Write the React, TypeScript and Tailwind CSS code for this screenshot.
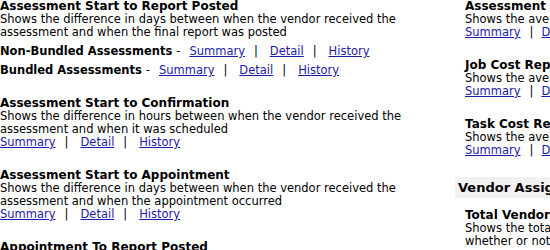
import React from "react";

const font = { fontFamily: '"DejaVu Sans", Verdana, sans-serif' };

function Links({ wide = true }: { wide?: boolean }) {
  const sep = wide ? "ml-[9px] mr-[12px]" : "ml-[9px] mr-[8px]";
  return (
    <div className="flex items-center h-[13px] whitespace-nowrap">
      <a href="#" className="text-[#1c1ca8] underline">Summary</a>
      <span className={sep}>|</span>
      <a href="#" className="text-[#1c1ca8] underline">Detail</a>
      <span className={sep}>|</span>
      <a href="#" className="text-[#1c1ca8] underline">History</a>
    </div>
  );
}

function Report({ title, lines, wide = true }: { title: string; lines: string[]; wide?: boolean }) {
  return (
    <div className="mb-[20px]">
      <div className="font-bold text-[12px] h-[13px] whitespace-nowrap">{title}</div>
      {lines.map((l) => (
        <div key={l} className="h-[13px] whitespace-nowrap">{l}</div>
      ))}
      <Links wide={wide} />
    </div>
  );
}

function BundleRow({ label }: { label: string }) {
  return (
    <div className="flex items-center h-[13px] mt-[6px] whitespace-nowrap">
      <span className="font-bold">{label}</span>
      <span className="ml-[4px] mr-[9px]">-</span>
      <a href="#" className="text-[#1c1ca8] underline">Summary</a>
      <span className="ml-[9px] mr-[12px]">|</span>
      <a href="#" className="text-[#1c1ca8] underline">Detail</a>
      <span className="ml-[9px] mr-[12px]">|</span>
      <a href="#" className="text-[#1c1ca8] underline">History</a>
    </div>
  );
}

export default function App() {
  return (
    <div
      className="w-[550px] h-[250px] overflow-hidden bg-white text-black text-[11.5px] leading-[13px]"
      style={font}
    >
      <div className="flex w-[800px]">
        {/* left column */}
        <div className="w-[455px] shrink-0">
          <div className="mb-[20px]">
            <div className="font-bold text-[12px] h-[13px]">Assessment Start to Report Posted</div>
            <div className="h-[13px] whitespace-nowrap">Shows the difference in days between when the vendor received the</div>
            <div className="h-[13px] whitespace-nowrap">assessment and when the final report was posted</div>
            <BundleRow label="Non-Bundled Assessments" />
            <BundleRow label="Bundled Assessments" />
          </div>
          <Report
            title="Assessment Start to Confirmation"
            lines={[
              "Shows the difference in hours between when the vendor received the",
              "assessment and when it was scheduled",
            ]}
          />
          <Report
            title="Assessment Start to Appointment"
            lines={[
              "Shows the difference in days between when the vendor received the",
              "assessment and when the appointment occurred",
            ]}
          />
          <Report
            title="Appointment To Report Posted"
            lines={["Shows the difference in days between when the appointment occurred"]}
          />
        </div>

        {/* right column */}
        <div className="w-[340px] shrink-0">
          <div className="pl-[10px]">
            <Report
              title="Assessment Cycle Time"
              lines={["Shows the average cycle time for assessments"]}
              wide={false}
            />
            <Report
              title="Job Cost Report"
              lines={["Shows the average job cost by vendor"]}
              wide={false}
            />
            <Report
              title="Task Cost Report"
              lines={["Shows the average task cost by vendor"]}
              wide={false}
            />
          </div>
          <div className="bg-[#f2f2f2] h-[21px] flex items-center pl-[3px] font-bold text-[13px]">
            Vendor Assignments
          </div>
          <div className="pl-[10px] mt-[11px]">
            <div className="font-bold text-[12px] h-[13px] whitespace-nowrap">Total Vendor Assignments</div>
            <div className="h-[13px] whitespace-nowrap">Shows the total number of assignments per vendor</div>
            <div className="h-[13px] whitespace-nowrap">whether or not they were accepted</div>
          </div>
        </div>
      </div>
    </div>
  );
}
